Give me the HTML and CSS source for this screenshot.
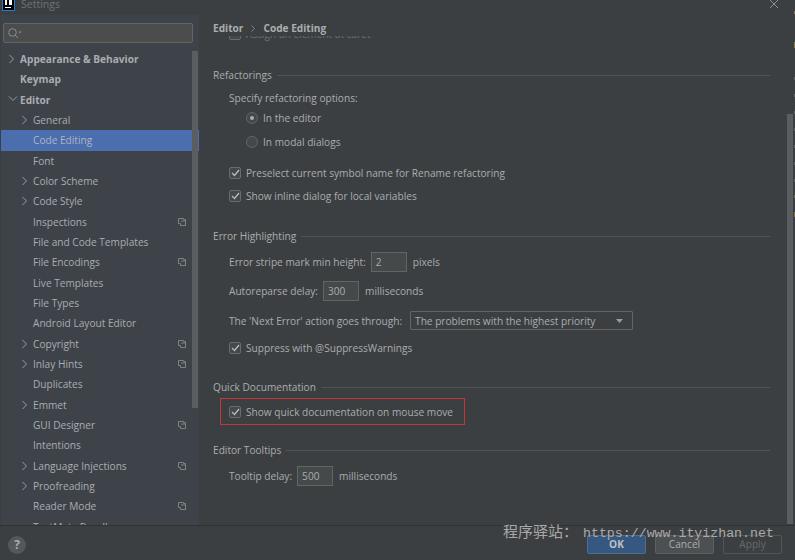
FILE: index.html
```html
<!DOCTYPE html>
<html lang="en">
<head>
  <meta charset="UTF-8">
  <title>Settings</title>
  <link rel="stylesheet" href="styles.css">
</head>
<body>
  <div class="window">
    <div class="titlebar">
      <svg class="app-logo" width="13" height="11" viewBox="0 0 13 11">
        <rect width="13" height="11" fill="#000"/>
        <rect x="0" y="0" width="1" height="11" fill="#1c7fd6"/>
        <rect x="12" y="0" width="1" height="11" fill="#1c7fd6"/>
        <rect x="0" y="10" width="13" height="1" fill="#1c7fd6"/>
        <rect x="3" y="0" width="2" height="5" fill="#fff"/>
        <rect x="7" y="0" width="3" height="5" fill="#fff"/>
        <rect x="3" y="7" width="6" height="1" fill="#fff"/>
      </svg>
      <span class="title">Settings</span>
      <svg class="close" width="11" height="9" viewBox="0 0 11 9"><path d="M1 0 L9 8 M9 0 L1 8" stroke="#8d9091" stroke-width="1" fill="none"/></svg>
    </div>

    <div class="main">
      <div class="sidebar">
        <div class="search">
          <svg width="15" height="12" viewBox="0 0 15 12"><circle cx="5.5" cy="5.5" r="3.8" stroke="#8b8e90" fill="none"/><path d="M8.2 8.2 L11 11" stroke="#8b8e90" fill="none"/><path d="M11.5 4.5 h3 l-1.5 2 z" fill="#8b8e90"/></svg>
        </div>
        <div class="tree">
          <div class="tree-row bold"><svg class="arrow" width="7" height="10" viewBox="0 0 7 10"><path d="M1.5 1 L5.5 5 L1.5 9" /></svg>Appearance &amp; Behavior</div>
          <div class="tree-row bold">Keymap</div>
          <div class="tree-row bold"><svg class="arrow" width="10" height="7" viewBox="0 0 10 7"><path d="M1 1.500 L5 5.500 L9 1.500" /></svg>Editor</div>
          <div class="tree-row sub"><svg class="arrow" width="7" height="10" viewBox="0 0 7 10"><path d="M1.5 1 L5.5 5 L1.5 9" /></svg>General</div>
          <div class="tree-row sub selected">Code Editing</div>
          <div class="tree-row sub">Font</div>
          <div class="tree-row sub"><svg class="arrow" width="7" height="10" viewBox="0 0 7 10"><path d="M1.5 1 L5.5 5 L1.5 9" /></svg>Color Scheme</div>
          <div class="tree-row sub"><svg class="arrow" width="7" height="10" viewBox="0 0 7 10"><path d="M1.5 1 L5.5 5 L1.5 9" /></svg>Code Style</div>
          <div class="tree-row sub">Inspections<svg class="copy" width="8" height="8" viewBox="0 0 8 8"><path d="M0.5 0.5 h5 v1 h2 v6 h-5 v-2 h-2 z M3 3 h4" /></svg></div>
          <div class="tree-row sub">File and Code Templates</div>
          <div class="tree-row sub">File Encodings<svg class="copy" width="8" height="8" viewBox="0 0 8 8"><path d="M0.5 0.5 h5 v1 h2 v6 h-5 v-2 h-2 z M3 3 h4" /></svg></div>
          <div class="tree-row sub">Live Templates</div>
          <div class="tree-row sub">File Types</div>
          <div class="tree-row sub">Android Layout Editor</div>
          <div class="tree-row sub"><svg class="arrow" width="7" height="10" viewBox="0 0 7 10"><path d="M1.5 1 L5.5 5 L1.5 9" /></svg>Copyright<svg class="copy" width="8" height="8" viewBox="0 0 8 8"><path d="M0.5 0.5 h5 v1 h2 v6 h-5 v-2 h-2 z M3 3 h4" /></svg></div>
          <div class="tree-row sub"><svg class="arrow" width="7" height="10" viewBox="0 0 7 10"><path d="M1.5 1 L5.5 5 L1.5 9" /></svg>Inlay Hints<svg class="copy" width="8" height="8" viewBox="0 0 8 8"><path d="M0.5 0.5 h5 v1 h2 v6 h-5 v-2 h-2 z M3 3 h4" /></svg></div>
          <div class="tree-row sub">Duplicates</div>
          <div class="tree-row sub"><svg class="arrow" width="7" height="10" viewBox="0 0 7 10"><path d="M1.5 1 L5.5 5 L1.5 9" /></svg>Emmet</div>
          <div class="tree-row sub">GUI Designer<svg class="copy" width="8" height="8" viewBox="0 0 8 8"><path d="M0.5 0.5 h5 v1 h2 v6 h-5 v-2 h-2 z M3 3 h4" /></svg></div>
          <div class="tree-row sub">Intentions</div>
          <div class="tree-row sub"><svg class="arrow" width="7" height="10" viewBox="0 0 7 10"><path d="M1.5 1 L5.5 5 L1.5 9" /></svg>Language Injections<svg class="copy" width="8" height="8" viewBox="0 0 8 8"><path d="M0.5 0.5 h5 v1 h2 v6 h-5 v-2 h-2 z M3 3 h4" /></svg></div>
          <div class="tree-row sub"><svg class="arrow" width="7" height="10" viewBox="0 0 7 10"><path d="M1.5 1 L5.5 5 L1.5 9" /></svg>Proofreading</div>
          <div class="tree-row sub">Reader Mode<svg class="copy" width="8" height="8" viewBox="0 0 8 8"><path d="M0.5 0.5 h5 v1 h2 v6 h-5 v-2 h-2 z M3 3 h4" /></svg></div>
          <div class="tree-row sub">TextMate Bundles</div>
        </div>
        <div class="side-scroll"></div>
      </div>

      <div class="content">
        <div class="breadcrumb">Editor<svg class="crumb-sep" width="4" height="7" viewBox="0 0 4 7"><path d="M0.5 0.5 L3.5 3.5 L0.5 6.5"/></svg>Code Editing</div>
        <div class="panel">
          <div class="clipped">
            <div class="option"><span class="check"></span>Assign an element at caret</div>
          </div>

          <div class="group refactorings">
            <div class="group-title">Refactorings</div>
            <div class="line intro">Specify refactoring options:</div>
            <div class="radios">
              <div class="option"><span class="radio on"></span>In the editor</div>
              <div class="option"><span class="radio"></span>In modal dialogs</div>
            </div>
            <div class="checks">
              <div class="option"><span class="check"><svg width="9" height="8" viewBox="0 0 9 8"><path d="M1 4 L3.5 6.5 L8 1"/></svg></span>Preselect current symbol name for Rename refactoring</div>
              <div class="option"><span class="check"><svg width="9" height="8" viewBox="0 0 9 8"><path d="M1 4 L3.5 6.5 L8 1"/></svg></span>Show inline dialog for local variables</div>
            </div>
          </div>

          <div class="group errors">
            <div class="group-title">Error Highlighting</div>
            <div class="line">Error stripe mark min height:<span class="field">2</span>pixels</div>
            <div class="line">Autoreparse delay:<span class="field">300</span>milliseconds</div>
            <div class="line">The 'Next Error' action goes through:<span class="select">The problems with the highest priority<svg width="8" height="4" viewBox="0 0 8 4"><path d="M0 0 h7 l-3.500 4 z"/></svg></span></div>
            <div class="option"><span class="check"><svg width="9" height="8" viewBox="0 0 9 8"><path d="M1 4 L3.5 6.5 L8 1"/></svg></span>Suppress with @SuppressWarnings</div>
          </div>

          <div class="group quick-doc">
            <div class="group-title">Quick Documentation</div>
            <div class="highlight">
              <div class="option"><span class="check"><svg width="9" height="8" viewBox="0 0 9 8"><path d="M1 4 L3.5 6.5 L8 1"/></svg></span>Show quick documentation on mouse move</div>
            </div>
          </div>

          <div class="group tooltips">
            <div class="group-title">Editor Tooltips</div>
            <div class="line">Tooltip delay:<span class="field">500</span>milliseconds</div>
          </div>
        </div>
        <div class="main-scroll"></div>
      </div>
    </div>

    <div class="footer">
      <span class="help">?</span>
      <div class="buttons">
        <span class="btn primary">OK</span>
        <span class="btn">Cancel</span>
        <span class="btn disabled">Apply</span>
      </div>
    </div>

    <!-- error stripe marks along the window edge -->
    <svg class="stripes" width="1" height="230" viewBox="0 0 1 230">
      <rect y="11" width="1" height="3" fill="#8a7a4a"/>
      <rect y="42" width="1" height="6" fill="#8a7a4a"/>
      <rect y="77" width="1" height="3" fill="#5b6468"/>
      <rect y="94" width="1" height="3" fill="#5b6468"/>
      <rect y="111" width="1" height="3" fill="#5b6468"/>
      <rect y="128" width="1" height="3" fill="#5b6468"/>
      <rect y="145" width="1" height="3" fill="#5b6468"/>
      <rect y="162" width="1" height="3" fill="#5b6468"/>
      <rect y="179" width="1" height="3" fill="#5b6468"/>
      <rect y="195" width="1" height="3" fill="#6a7050"/>
      <rect y="212" width="1" height="5" fill="#7a7450"/>
    </svg>

    <div class="watermark">程序驿站：<span class="watermark-url">https://www.ityizhan.net</span></div>
  </div>
</body>
</html>
```

FILE: styles.css
```css
* {
  box-sizing: border-box;
}

body {
  margin: 0;
  background: #3c3f41;
  font-family: "Open Sans", "Liberation Sans", sans-serif;
  font-size: 10.15px;
  color: #a9adb0;
  overflow: hidden;
}

.window {
  position: relative;
  width: 795px;
  height: 560px;
  display: flex;
  flex-direction: column;
  overflow: hidden;
}

/* Title bar */
.titlebar {
  height: 15px;
  display: flex;
  align-items: flex-start;
  padding-left: 2px;
  background: #3c3f41;
}

.app-logo {
  display: block;
}

.title {
  margin-left: 6px;
  margin-top: -3px;
  color: #6f7274;
  font-size: 10.5px;
}

.close {
  margin-left: auto;
  margin-right: 15px;
}

/* Main area */
.main {
  flex: 1;
  display: flex;
  min-height: 0;
}

.sidebar {
  position: relative;
  width: 198px;
  margin-left: 1px;
  background: #3e434a;
  overflow: hidden;
}

.search {
  margin: 8px 6px 0 2px;
  height: 20px;
  background: #4a4d4c;
  border: 1px solid #646464;
  border-radius: 2px;
  padding: 3px 0 0 3px;
}

.search svg {
  display: block;
}

.tree {
  margin-top: 6px;
}

.tree-row {
  position: relative;
  height: 20.34px;
  line-height: 20.34px;
  padding-left: 19px;
  white-space: nowrap;
}

.tree-row.bold {
  font-weight: 700;
  color: #a9adb0;
}

.tree-row.sub {
  padding-left: 32px;
}

.tree-row.selected {
  background: #4b6eaf;
  color: #aeb4bf;
}

.arrow {
  position: absolute;
  left: 7px;
  top: 5px;
  fill: none;
  stroke: #9a9d9f;
  stroke-width: 1;
}

.sub .arrow {
  left: 20px;
}

.copy {
  position: absolute;
  left: 177px;
  top: 6px;
  fill: none;
  stroke: #7f8385;
  stroke-width: 1;
}

.side-scroll {
  position: absolute;
  left: 191px;
  top: 36px;
  width: 6px;
  height: 357px;
  background: #5a5e61;
}

/* Right side */
.content {
  position: relative;
  flex: 1;
  min-width: 0;
  background: #3c3f41;
  padding-left: 14px;
}

.breadcrumb {
  display: flex;
  align-items: center;
  height: 21px;
  padding-top: 6px;
  font-weight: 700;
  color: #a9adb0;
  line-height: 15px;
}

.crumb-sep {
  margin: 0 8px;
  fill: none;
  stroke: #7f8385;
}

.panel {
  height: 474px;
  overflow: hidden;
}

.clipped {
  height: 5px;
  overflow: hidden;
  color: #6f7274;
}

.clipped .option {
  margin-top: -13.5px;
}

.group {
  width: 557px;
}

.group-title {
  display: flex;
  align-items: center;
  gap: 5px;
  height: 16px;
  white-space: nowrap;
}

.group-title::after {
  content: "";
  flex: 1;
  height: 1px;
  background: #515456;
}

.refactorings {
  margin-top: 26px;
}

.errors {
  margin-top: 20.5px;
}

.quick-doc {
  margin-top: 19.5px;
}

.tooltips {
  margin-top: 17px;
}

.line {
  display: flex;
  align-items: center;
  height: 24px;
  margin-left: 16px;
  white-space: nowrap;
}

.line.intro {
  height: 16px;
  margin-top: 7px;
}

.errors .line {
  margin-top: 5.5px;
}

.errors .option {
  margin-top: 4px;
}

.tooltips .line {
  margin-top: 6px;
}

.field {
  width: 36px;
  height: 20px;
  margin: 0 6px 0 5px;
  padding-left: 4px;
  line-height: 18px;
  background: #45494a;
  border: 1px solid #646464;
  color: #a9adb0;
}

.select {
  display: flex;
  align-items: center;
  justify-content: space-between;
  width: 223px;
  height: 19px;
  margin-left: 8px;
  padding: 0 8px 0 4px;
  background: #3c3f41;
  border: 1px solid #646464;
  border-radius: 1px;
}

.select svg {
  fill: #9a9d9f;
}

.option {
  display: flex;
  align-items: center;
  height: 23px;
  white-space: nowrap;
  margin-left: 16px;
}

.radios .option {
  height: 24px;
  margin-left: 33px;
}

.checks {
  margin-top: 7.5px;
}

.radio {
  width: 12px;
  height: 12px;
  margin-right: 5px;
  border-radius: 50%;
  border: 1px solid #646464;
  background: #43494a;
  display: flex;
  align-items: center;
  justify-content: center;
}

.radio.on::after {
  content: "";
  width: 4px;
  height: 4px;
  border-radius: 50%;
  background: #a9adb0;
}

.check {
  width: 12px;
  height: 12px;
  margin-right: 5px;
  border: 1px solid #6b6b6b;
  border-radius: 2px;
  background: #43494a;
  display: flex;
  align-items: center;
  justify-content: center;
}

.check svg {
  fill: none;
  stroke: #b5b8ba;
  stroke-width: 1.4;
}

.highlight {
  width: 245px;
  height: 27px;
  margin-left: 7px;
  margin-top: 3px;
  border: 1px solid #c4383a;
  display: flex;
  align-items: center;
}

.highlight .option {
  margin-left: 8px;
}

.main-scroll {
  position: absolute;
  left: 588px;
  top: 99px;
  width: 6px;
  height: 410px;
  background: #5a5e61;
}

/* Footer */
.footer {
  height: 35px;
  display: flex;
  align-items: center;
  justify-content: space-between;
  padding: 3px 13px 0 8px;
  background: #3c3f41;
  border-top: 1px solid #323232;
}

.help {
  width: 18px;
  height: 18px;
  border-radius: 50%;
  background: #54585a;
  color: #a9adb0;
  font-weight: 700;
  font-size: 12px;
  line-height: 18px;
  text-align: center;
}

.buttons {
  display: flex;
  gap: 9px;
}

.btn {
  width: 59px;
  height: 19px;
  line-height: 17px;
  text-align: center;
  border: 1px solid #5e6060;
  border-radius: 2px;
  background: #4c5052;
  color: #a9adb0;
}

.btn.primary {
  background: #365880;
  border-color: #4c708c;
  color: #bbc0c4;
  font-weight: 700;
}

.btn.disabled {
  background: #3c3f41;
  border-color: #525556;
  color: #65686a;
}

.stripes {
  position: absolute;
  top: 0;
  right: 0;
}

.watermark {
  position: absolute;
  left: 503px;
  top: 522px;
  font-family: "Noto Sans CJK SC", monospace;
  font-size: 15px;
  line-height: 18px;
  color: #a9a9a9;
  white-space: nowrap;
}

.watermark-url {
  margin-left: 5px;
  font-family: "Liberation Mono", monospace;
  font-size: 13.25px;
}
```
